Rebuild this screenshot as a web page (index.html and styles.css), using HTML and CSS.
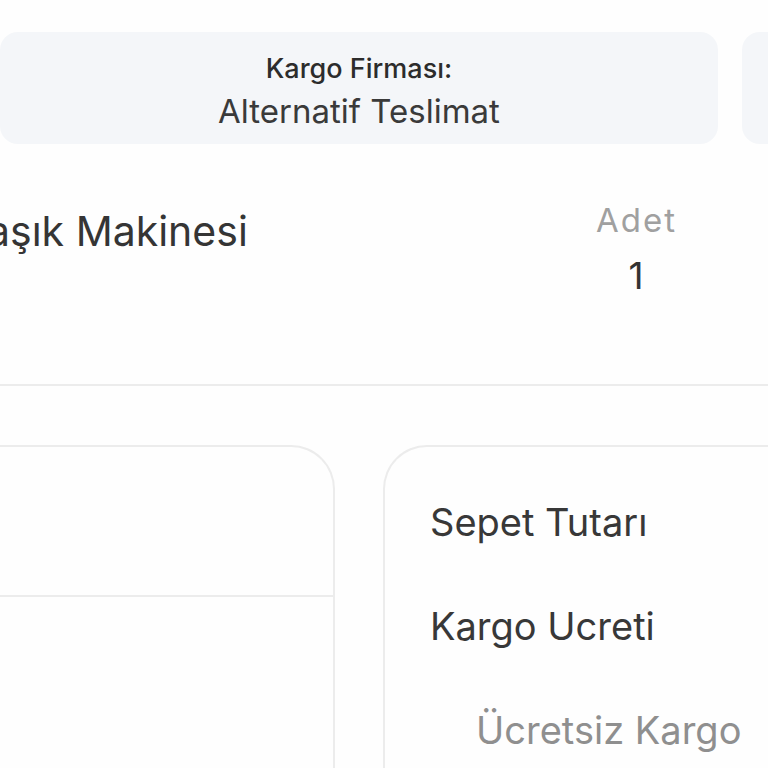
FILE: index.html
```html
<!DOCTYPE html>
<html lang="tr">
<head>
    <meta charset="UTF-8">
    <meta name="viewport" content="width=device-width, initial-scale=1.0">
    <title>Sepetim</title>
    <link rel="stylesheet" href="styles.css">
</head>
<body>
    <div class="page">
        <!-- kargo bilgileri -->
        <div class="shipping-row">
            <div class="info-card">
                <div class="info-label">Kargo Firması:</div>
                <div class="info-value">Alternatif Teslimat</div>
            </div>
            <div class="info-card"></div>
        </div>

        <!-- ürün satırı -->
        <div class="product-row">
            <div class="product-name">Bulaşık Makinesi</div>
            <div class="product-qty">
                <div class="qty-label">Adet</div>
                <div class="qty-value">1</div>
            </div>
        </div>

        <!-- alt bölüm -->
        <div class="bottom-row">
            <div class="panel panel-left">
                <div class="panel-head"></div>
            </div>
            <div class="panel panel-right">
                <div class="summary-item">Sepet Tutarı</div>
                <div class="summary-item">Kargo Ucreti</div>
                <div class="summary-item sub">Ücretsiz Kargo</div>
            </div>
        </div>
    </div>
</body>
</html>
```

FILE: styles.css
```css
* {
    margin: 0;
    padding: 0;
    box-sizing: border-box;
}

body {
    font-family: Inter, "Noto Sans", sans-serif;
    background-color: #fefefe;
    color: #363636;
    overflow: hidden;
    height: 100vh;
}

.page {
    width: 1100px;
}

/* kargo kartları */
.shipping-row {
    display: flex;
    gap: 24px;
    padding-top: 32px;
}

.info-card {
    width: 718px;
    height: 112px;
    flex-shrink: 0;
    background-color: #f4f6f9;
    border-radius: 18px;
    display: flex;
    flex-direction: column;
    align-items: center;
    padding-top: 21px;
    gap: 6px;
}

.info-label {
    font-size: 27px;
    line-height: 32px;
    font-weight: 500;
    color: #2c2c2c;
}

.info-value {
    font-size: 33px;
    line-height: 40px;
    color: #3a3a3a;
}

/* ürün */
.product-row {
    display: flex;
    align-items: flex-start;
    height: 242px;
    border-bottom: 2px solid #ececec;
    padding-top: 56px;
}

.product-name {
    margin-left: -74px;
    width: 670px;
    padding-top: 7px;
    font-size: 41px;
    line-height: 48px;
    color: #353535;
    white-space: nowrap;
}

.product-qty {
    width: 80px;
    flex-shrink: 0;
    text-align: center;
}

.qty-label {
    font-size: 33px;
    line-height: 40px;
    letter-spacing: 2px;
    color: #a0a0a0;
}

.qty-value {
    font-size: 37px;
    line-height: 44px;
    margin-top: 14px;
    color: #333;
}

/* alt paneller */
.bottom-row {
    display: flex;
    gap: 48px;
    margin-top: 59px;
}

.panel {
    border: 2px solid #ececec;
    border-bottom: none;
    height: 340px;
}

.panel-left {
    width: 375px;
    margin-left: -40px;
    border-top-right-radius: 44px;
}

.panel-head {
    height: 150px;
    border-bottom: 2px solid #ececec;
}

.panel-right {
    width: 600px;
    border-top-left-radius: 44px;
    padding: 51px 0 0 45px;
    display: flex;
    flex-direction: column;
    gap: 56px;
}

.summary-item {
    font-size: 38px;
    line-height: 48px;
    color: #383838;
}

.summary-item.sub {
    padding-left: 46px;
    color: #8f8f8f;
}
```
